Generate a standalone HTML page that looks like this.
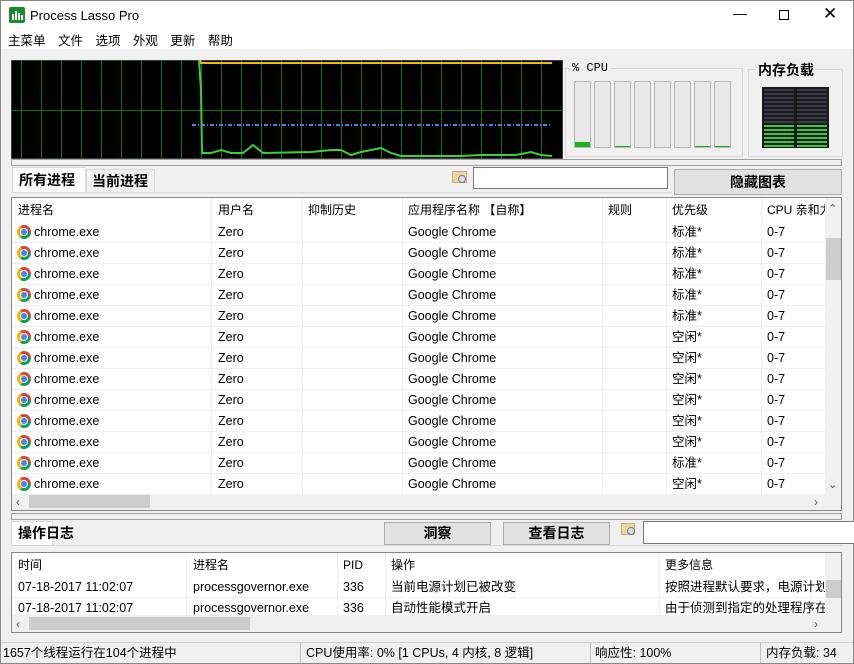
<!DOCTYPE html>
<html><head><meta charset="utf-8">
<style>
*{margin:0;padding:0;box-sizing:border-box}
body{width:854px;height:664px;overflow:hidden;background:#f0f0f0;font-family:"Liberation Sans","Noto Sans CJK SC",sans-serif;font-size:12px;color:#000;position:relative;line-height:15px}
.a{position:absolute}
.t{position:absolute;white-space:nowrap;line-height:15px}
.row{position:absolute;left:12px;width:813px;height:21px;border-bottom:1px solid #f0f0f0;background:#fff}
.row span{position:absolute;top:3px;white-space:nowrap;font-size:12.5px;line-height:15px}
.ic{position:absolute;left:5px;top:3px;width:14px;height:14px;border-radius:50%;background:conic-gradient(from -30deg,#db4437 0 120deg,#0f9d58 120deg 240deg,#f4b400 240deg 360deg)}
.ic::after{content:"";position:absolute;left:4px;top:4px;width:6px;height:6px;border-radius:50%;background:#4285f4;box-shadow:0 0 0 1px #fff}
.vl{position:absolute;top:0;width:1px;background:#f0f0f0}
.btn{position:absolute;background:#e1e1e1;border:1px solid #adadad;font-weight:bold;font-size:14px;text-align:center}
</style></head><body>
<div class="a" style="left:0;top:0;width:854px;height:664px;border:1px solid #888"></div>
<div class="a" style="left:1px;top:1px;width:852px;height:48px;background:#fff"></div>
<div class="a" style="left:9px;top:7px;width:16px;height:16px;background:#1a8a2a;border-radius:2px"></div>
<div class="a" style="left:12px;top:14px;width:2px;height:6px;background:#fff"></div>
<div class="a" style="left:15px;top:11px;width:2px;height:9px;background:#fff"></div>
<div class="a" style="left:18px;top:13px;width:2px;height:7px;background:#fff"></div>
<div class="a" style="left:21px;top:15px;width:2px;height:5px;background:#fff"></div>
<div class="t" style="left:30px;top:8px;font-size:13px">Process Lasso Pro</div>
<div class="t" style="left:733px;top:6px;font-size:14px">—</div>
<div class="a" style="left:779px;top:10px;width:10px;height:10px;border:1px solid #000"></div>
<div class="t" style="left:823px;top:6px;font-size:17px">✕</div>
<div class="t" style="left:8px;top:34px;font-size:12.5px;word-spacing:9px">主菜单 文件 选项 外观 更新 帮助</div>

<!-- graph -->
<svg class="a" style="left:11px;top:60px" width="552" height="99">
<rect x="0" y="0" width="552" height="99" fill="#000" stroke="#777"/>
<g stroke="#1a6e1a" stroke-width="1">
<line x1="10.5" y1="0" x2="10.5" y2="99"/><line x1="30.5" y1="0" x2="30.5" y2="99"/><line x1="50.5" y1="0" x2="50.5" y2="99"/><line x1="70.5" y1="0" x2="70.5" y2="99"/><line x1="90.5" y1="0" x2="90.5" y2="99"/><line x1="110.5" y1="0" x2="110.5" y2="99"/><line x1="130.5" y1="0" x2="130.5" y2="99"/><line x1="150.5" y1="0" x2="150.5" y2="99"/><line x1="170.5" y1="0" x2="170.5" y2="99"/><line x1="190.5" y1="0" x2="190.5" y2="99"/><line x1="210.5" y1="0" x2="210.5" y2="99"/><line x1="230.5" y1="0" x2="230.5" y2="99"/><line x1="250.5" y1="0" x2="250.5" y2="99"/><line x1="270.5" y1="0" x2="270.5" y2="99"/><line x1="290.5" y1="0" x2="290.5" y2="99"/><line x1="310.5" y1="0" x2="310.5" y2="99"/><line x1="330.5" y1="0" x2="330.5" y2="99"/><line x1="350.5" y1="0" x2="350.5" y2="99"/><line x1="370.5" y1="0" x2="370.5" y2="99"/><line x1="390.5" y1="0" x2="390.5" y2="99"/><line x1="410.5" y1="0" x2="410.5" y2="99"/><line x1="430.5" y1="0" x2="430.5" y2="99"/><line x1="450.5" y1="0" x2="450.5" y2="99"/><line x1="470.5" y1="0" x2="470.5" y2="99"/><line x1="490.5" y1="0" x2="490.5" y2="99"/><line x1="510.5" y1="0" x2="510.5" y2="99"/><line x1="530.5" y1="0" x2="530.5" y2="99"/><line x1="0" y1="50.5" x2="552" y2="50.5"/>
</g>
<polyline points="189,0 190,3 541,3" fill="none" stroke="#f5b800" stroke-width="2"/>
<line x1="181" y1="65" x2="541" y2="65" stroke="#4a7ee0" stroke-width="2" stroke-dasharray="4,2,1,2"/>
<polyline points="188,0 190,30 191,93 200,93 210,90 220,93 232,93 242,85 252,93 300,92 320,90 330,90 340,95 350,92 370,88 380,93 390,96 420,96 450,96 470,95 505,95 520,92 530,95 541,96" fill="none" stroke="#3bd03b" stroke-width="2"/>
</svg>
<div class="a" style="left:565px;top:68px;width:178px;height:89px;border:1px solid #d8d8d8"></div>
<div class="t" style="left:570px;top:61px;background:#f0f0f0;padding:0 2px;font-family:'Liberation Mono','Noto Sans CJK SC',monospace;font-size:12px">% CPU</div>
<div class="a" style="left:574px;top:81px;width:17px;height:67px;border:1px solid #b8b8b8;background:#e8e8e8"><div class="a" style="left:0;bottom:0;width:15px;height:5px;background:#19b019"></div></div>
<div class="a" style="left:594px;top:81px;width:17px;height:67px;border:1px solid #b8b8b8;background:#e8e8e8"></div>
<div class="a" style="left:614px;top:81px;width:17px;height:67px;border:1px solid #b8b8b8;background:#e8e8e8"><div class="a" style="left:0;bottom:0;width:15px;height:1px;background:#19b019"></div></div>
<div class="a" style="left:634px;top:81px;width:17px;height:67px;border:1px solid #b8b8b8;background:#e8e8e8"></div>
<div class="a" style="left:654px;top:81px;width:17px;height:67px;border:1px solid #b8b8b8;background:#e8e8e8"></div>
<div class="a" style="left:674px;top:81px;width:17px;height:67px;border:1px solid #b8b8b8;background:#e8e8e8"></div>
<div class="a" style="left:694px;top:81px;width:17px;height:67px;border:1px solid #b8b8b8;background:#e8e8e8"><div class="a" style="left:0;bottom:0;width:15px;height:1px;background:#19b019"></div></div>
<div class="a" style="left:714px;top:81px;width:17px;height:67px;border:1px solid #b8b8b8;background:#e8e8e8"><div class="a" style="left:0;bottom:0;width:15px;height:1px;background:#19b019"></div></div>
<div class="a" style="left:748px;top:69px;width:95px;height:88px;border:1px solid #d8d8d8"></div>
<div class="t" style="left:756px;top:62px;background:#f0f0f0;padding:0 2px;font-weight:bold;font-size:14px;line-height:17px">内存负载</div>
<svg class="a" style="left:762px;top:87px" width="67" height="61">
<rect width="67" height="61" fill="#1a1a1a"/>
<g stroke="#3a3a4a" stroke-width="2"><line x1="2" y1="3" x2="32" y2="3"/><line x1="2" y1="7" x2="32" y2="7"/><line x1="2" y1="11" x2="32" y2="11"/><line x1="2" y1="15" x2="32" y2="15"/><line x1="2" y1="19" x2="32" y2="19"/><line x1="2" y1="23" x2="32" y2="23"/><line x1="2" y1="27" x2="32" y2="27"/><line x1="2" y1="31" x2="32" y2="31"/><line x1="2" y1="35" x2="32" y2="35"/><line x1="35" y1="3" x2="65" y2="3"/><line x1="35" y1="7" x2="65" y2="7"/><line x1="35" y1="11" x2="65" y2="11"/><line x1="35" y1="15" x2="65" y2="15"/><line x1="35" y1="19" x2="65" y2="19"/><line x1="35" y1="23" x2="65" y2="23"/><line x1="35" y1="27" x2="65" y2="27"/><line x1="35" y1="31" x2="65" y2="31"/><line x1="35" y1="35" x2="65" y2="35"/></g>
<g stroke="#3ac83a" stroke-width="2"><line x1="2" y1="39" x2="32" y2="39"/><line x1="2" y1="43" x2="32" y2="43"/><line x1="2" y1="47" x2="32" y2="47"/><line x1="2" y1="51" x2="32" y2="51"/><line x1="2" y1="55" x2="32" y2="55"/><line x1="2" y1="59" x2="32" y2="59"/><line x1="35" y1="39" x2="65" y2="39"/><line x1="35" y1="43" x2="65" y2="43"/><line x1="35" y1="47" x2="65" y2="47"/><line x1="35" y1="51" x2="65" y2="51"/><line x1="35" y1="55" x2="65" y2="55"/><line x1="35" y1="59" x2="65" y2="59"/></g>
</svg>
<div class="a" style="left:11px;top:159px;width:831px;height:7px;border:1px solid #a0a0a0;background:#f0f0f0"></div>

<!-- tabs -->
<div class="a" style="left:12px;top:167px;width:74px;height:26px;background:#fff;border:1px solid #d9d9d9;border-bottom:none"></div>
<div class="t" style="left:19px;top:172px;font-weight:bold;font-size:14px;line-height:17px">所有进程</div>
<div class="a" style="left:86px;top:169px;width:69px;height:23px;background:#f0f0f0;border:1px solid #d9d9d9;border-bottom:none"></div>
<div class="t" style="left:92px;top:173px;font-weight:bold;font-size:14px;line-height:17px">当前进程</div>
<div class="a" style="left:12px;top:192px;width:660px;height:1px;background:#d9d9d9"></div>
<div class="a" style="left:452px;top:171px;width:15px;height:12px;background:#e9d8a0;border:1px solid #c8b070"></div>
<div class="a" style="left:458px;top:175px;width:8px;height:8px;border:1px solid #777;border-radius:50%;background:#dde"></div>
<div class="a" style="left:473px;top:167px;width:195px;height:22px;background:#fff;border:1px solid #7a7a7a"></div>
<div class="btn" style="left:674px;top:169px;width:168px;height:26px;line-height:24px">隐藏图表</div>

<!-- process table -->
<div class="a" style="left:11px;top:197px;width:831px;height:314px;border:1px solid #828790;background:#fff;overflow:hidden">
<div class="t" style="left:6px;top:5px">进程名</div>
<div class="t" style="left:206px;top:5px">用户名</div>
<div class="t" style="left:296px;top:5px">抑制历史</div>
<div class="t" style="left:396px;top:5px">应用程序名称 【自称】</div>
<div class="t" style="left:596px;top:5px">规则</div>
<div class="t" style="left:660px;top:5px">优先级</div>
<div class="t" style="left:755px;top:5px">CPU 亲和力</div>
<div class="vl" style="left:199px;height:300px"></div><div class="vl" style="left:290px;height:300px"></div><div class="vl" style="left:390px;height:300px"></div><div class="vl" style="left:590px;height:300px"></div><div class="vl" style="left:654px;height:300px"></div><div class="vl" style="left:749px;height:300px"></div>
<div class="a" style="left:813px;top:0;width:17px;height:295px;background:#f0f0f0"></div>
<div class="a" style="left:814px;top:40px;width:15px;height:42px;background:#cdcdcd"></div>
<div class="t" style="left:816px;top:4px;font-size:11px;color:#555">⌃</div>
<div class="t" style="left:816px;top:280px;font-size:11px;color:#555">⌄</div>
<div class="a" style="left:0;top:295px;width:830px;height:17px;background:#f0f0f0"></div>
<div class="a" style="left:17px;top:297px;width:121px;height:13px;background:#cdcdcd"></div>
<div class="t" style="left:4px;top:297px;color:#555">‹</div>
<div class="t" style="left:802px;top:297px;color:#555">›</div>
</div>
<div class="a" style="left:12px;top:222px;width:813px;height:272px;overflow:hidden">
<div class="row" style="left:0;top:0"><div class="ic"></div><span style="left:22px">chrome.exe</span><span style="left:206px">Zero</span><span style="left:396px">Google Chrome</span><span style="left:660px">标准*</span><span style="left:755px">0-7</span></div>
<div class="row" style="left:0;top:21px"><div class="ic"></div><span style="left:22px">chrome.exe</span><span style="left:206px">Zero</span><span style="left:396px">Google Chrome</span><span style="left:660px">标准*</span><span style="left:755px">0-7</span></div>
<div class="row" style="left:0;top:42px"><div class="ic"></div><span style="left:22px">chrome.exe</span><span style="left:206px">Zero</span><span style="left:396px">Google Chrome</span><span style="left:660px">标准*</span><span style="left:755px">0-7</span></div>
<div class="row" style="left:0;top:63px"><div class="ic"></div><span style="left:22px">chrome.exe</span><span style="left:206px">Zero</span><span style="left:396px">Google Chrome</span><span style="left:660px">标准*</span><span style="left:755px">0-7</span></div>
<div class="row" style="left:0;top:84px"><div class="ic"></div><span style="left:22px">chrome.exe</span><span style="left:206px">Zero</span><span style="left:396px">Google Chrome</span><span style="left:660px">标准*</span><span style="left:755px">0-7</span></div>
<div class="row" style="left:0;top:105px"><div class="ic"></div><span style="left:22px">chrome.exe</span><span style="left:206px">Zero</span><span style="left:396px">Google Chrome</span><span style="left:660px">空闲*</span><span style="left:755px">0-7</span></div>
<div class="row" style="left:0;top:126px"><div class="ic"></div><span style="left:22px">chrome.exe</span><span style="left:206px">Zero</span><span style="left:396px">Google Chrome</span><span style="left:660px">空闲*</span><span style="left:755px">0-7</span></div>
<div class="row" style="left:0;top:147px"><div class="ic"></div><span style="left:22px">chrome.exe</span><span style="left:206px">Zero</span><span style="left:396px">Google Chrome</span><span style="left:660px">空闲*</span><span style="left:755px">0-7</span></div>
<div class="row" style="left:0;top:168px"><div class="ic"></div><span style="left:22px">chrome.exe</span><span style="left:206px">Zero</span><span style="left:396px">Google Chrome</span><span style="left:660px">空闲*</span><span style="left:755px">0-7</span></div>
<div class="row" style="left:0;top:189px"><div class="ic"></div><span style="left:22px">chrome.exe</span><span style="left:206px">Zero</span><span style="left:396px">Google Chrome</span><span style="left:660px">空闲*</span><span style="left:755px">0-7</span></div>
<div class="row" style="left:0;top:210px"><div class="ic"></div><span style="left:22px">chrome.exe</span><span style="left:206px">Zero</span><span style="left:396px">Google Chrome</span><span style="left:660px">空闲*</span><span style="left:755px">0-7</span></div>
<div class="row" style="left:0;top:231px"><div class="ic"></div><span style="left:22px">chrome.exe</span><span style="left:206px">Zero</span><span style="left:396px">Google Chrome</span><span style="left:660px">标准*</span><span style="left:755px">0-7</span></div>
<div class="row" style="left:0;top:252px"><div class="ic"></div><span style="left:22px">chrome.exe</span><span style="left:206px">Zero</span><span style="left:396px">Google Chrome</span><span style="left:660px">空闲*</span><span style="left:755px">0-7</span></div>
<div class="vl" style="left:199px;height:272px"></div><div class="vl" style="left:290px;height:272px"></div><div class="vl" style="left:390px;height:272px"></div><div class="vl" style="left:590px;height:272px"></div><div class="vl" style="left:654px;height:272px"></div><div class="vl" style="left:749px;height:272px"></div>
</div>

<div class="a" style="left:11px;top:513px;width:831px;height:7px;border:1px solid #a0a0a0"></div>

<!-- log section -->
<div class="a" style="left:11px;top:521px;width:42px;height:25px;background:#fff;border:1px solid #d9d9d9;border-bottom:none"></div>
<div class="t" style="left:18px;top:525px;font-weight:bold;font-size:14px;line-height:17px">操作日志</div>
<div class="a" style="left:11px;top:545px;width:831px;height:1px;background:#d9d9d9"></div>
<div class="btn" style="left:384px;top:522px;width:107px;height:23px;line-height:21px">洞察</div>
<div class="btn" style="left:503px;top:522px;width:107px;height:23px;line-height:21px">查看日志</div>
<div class="a" style="left:621px;top:523px;width:14px;height:12px;background:#e9d8a0;border:1px solid #c8b070"></div>
<div class="a" style="left:627px;top:527px;width:8px;height:8px;border:1px solid #777;border-radius:50%;background:#dde"></div>
<div class="a" style="left:643px;top:521px;width:212px;height:23px;background:#fff;border:1px solid #7a7a7a"></div>

<div class="a" style="left:11px;top:552px;width:831px;height:81px;border:1px solid #828790;background:#fff;overflow:hidden">
<div class="t" style="left:6px;top:5px">时间</div>
<div class="t" style="left:181px;top:5px">进程名</div>
<div class="t" style="left:331px;top:5px">PID</div>
<div class="t" style="left:379px;top:5px">操作</div>
<div class="t" style="left:653px;top:5px">更多信息</div>
<div class="vl" style="left:174px;height:62px"></div><div class="vl" style="left:325px;height:62px"></div><div class="vl" style="left:373px;height:62px"></div><div class="vl" style="left:647px;height:62px"></div>
<div class="a" style="left:0;top:44px;width:813px;height:1px;background:#f0f0f0"></div>
<div class="t" style="left:6px;top:27px;font-size:12.5px">07-18-2017 11:02:07</div>
<div class="t" style="left:181px;top:27px;font-size:12.5px">processgovernor.exe</div>
<div class="t" style="left:331px;top:27px;font-size:12.5px">336</div>
<div class="t" style="left:379px;top:27px;font-size:12.5px">当前电源计划已被改变</div>
<div class="t" style="left:653px;top:27px;font-size:12.5px">按照进程默认要求，电源计划</div>
<div class="t" style="left:6px;top:48px;font-size:12.5px">07-18-2017 11:02:07</div>
<div class="t" style="left:181px;top:48px;font-size:12.5px">processgovernor.exe</div>
<div class="t" style="left:331px;top:48px;font-size:12.5px">336</div>
<div class="t" style="left:379px;top:48px;font-size:12.5px">自动性能模式开启</div>
<div class="t" style="left:653px;top:48px;font-size:12.5px">由于侦测到指定的处理程序在</div>
<div class="a" style="left:813px;top:0;width:17px;height:62px;background:#f0f0f0"></div>
<div class="a" style="left:814px;top:27px;width:15px;height:18px;background:#cdcdcd"></div>
<div class="a" style="left:0;top:62px;width:830px;height:17px;background:#f0f0f0"></div>
<div class="a" style="left:17px;top:64px;width:221px;height:13px;background:#cdcdcd"></div>
<div class="t" style="left:4px;top:64px;color:#555">‹</div>
<div class="t" style="left:802px;top:64px;color:#555">›</div>
</div>

<!-- status -->
<div class="a" style="left:1px;top:642px;width:852px;height:1px;background:#d0d0d0"></div>
<div class="t" style="left:3px;top:646px;font-size:12.5px">1657个线程运行在104个进程中</div>
<div class="a" style="left:300px;top:643px;width:1px;height:20px;background:#c0c0c0"></div>
<div class="t" style="left:306px;top:646px;font-size:12.5px">CPU使用率: 0% [1 CPUs, 4 内核, 8 逻辑]</div>
<div class="a" style="left:590px;top:643px;width:1px;height:20px;background:#c0c0c0"></div>
<div class="t" style="left:595px;top:646px;font-size:12.5px">响应性: 100%</div>
<div class="a" style="left:760px;top:643px;width:1px;height:20px;background:#c0c0c0"></div>
<div class="t" style="left:766px;top:646px;font-size:12.5px">内存负载: 34</div>
</body></html>
